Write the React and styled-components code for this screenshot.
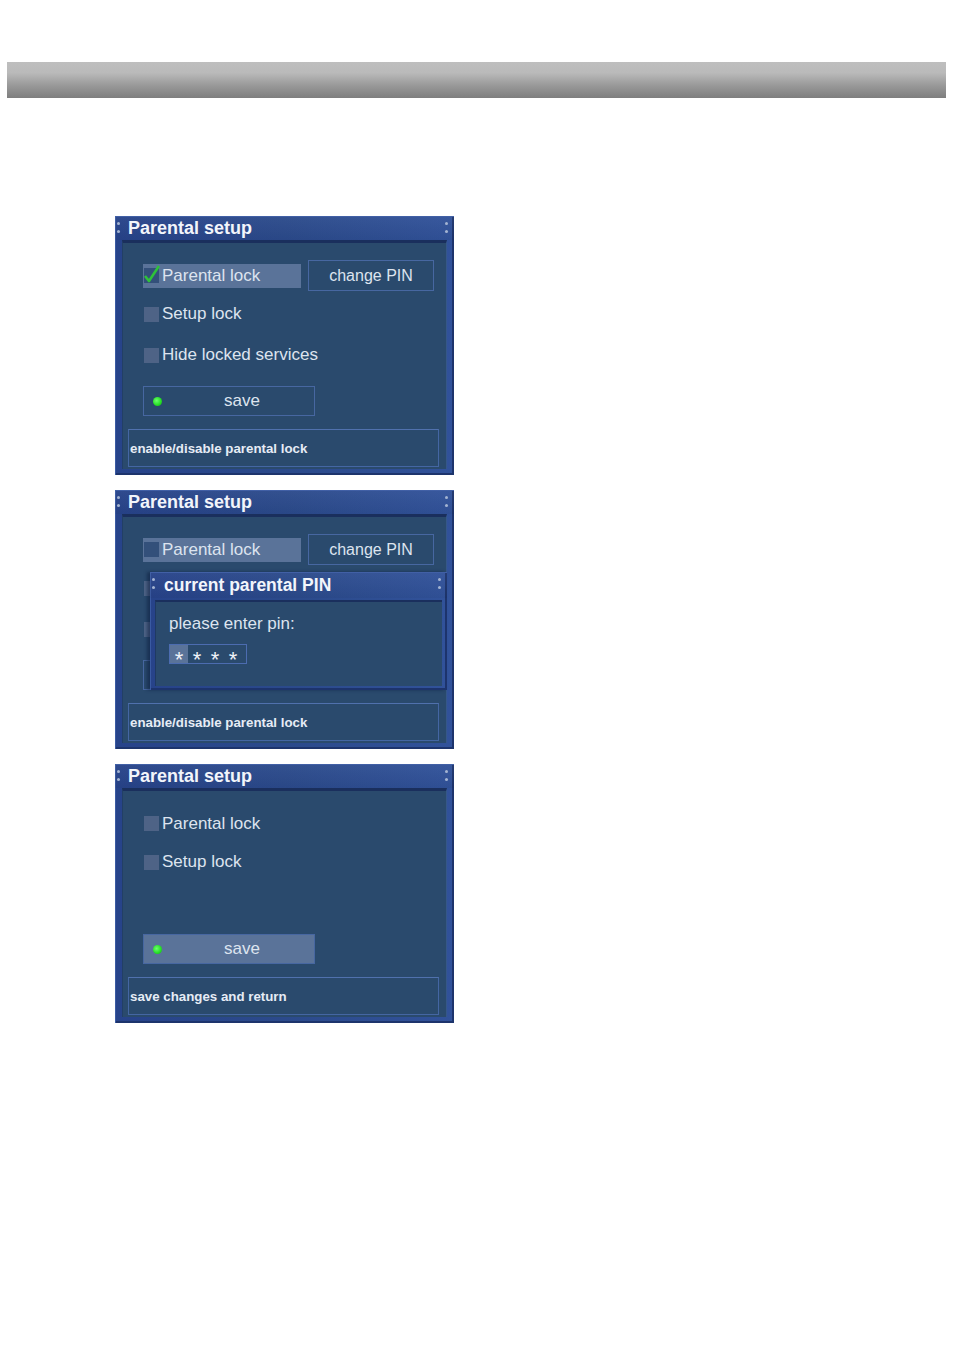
import React from 'react';
import styled, { createGlobalStyle } from 'styled-components';

const GlobalStyle = createGlobalStyle`
  html, body {
    margin: 0;
    padding: 0;
    background: #ffffff;
  }
  body {
    font-family: "Liberation Sans", Arial, sans-serif;
  }
`;

const Page = styled.div`
  width: 954px;
  min-height: 1350px;
  padding-top: 62px;
  box-sizing: border-box;
`;

const HeaderBar = styled.div`
  margin: 0 8px 0 7px;
  height: 36px;
  background: linear-gradient(to bottom, #bebebe 0%, #bababa 30%, #999999 65%, #7e7e7e 100%);
`;

const Stack = styled.div`
  margin-top: 118px;
  padding-left: 115px;
  display: flex;
  flex-direction: column;
  gap: 15px;
`;

const Frame = styled.section`
  position: relative;
  width: 339px;
  height: 259px;
  box-sizing: border-box;
  display: flex;
  flex-direction: column;
  background: linear-gradient(to right, #27438a 0%, #2b4a8b 50%, #31529a 100%);
  box-shadow: inset 1px 1px 0 #3a5aa2, inset -2px -2px 0 #1d346c;
`;

const TitleBar = styled.header`
  position: relative;
  height: ${(p) => p.$h || 24}px;
  flex: none;
  display: flex;
  align-items: center;
  padding-left: ${(p) => p.$pad || 13}px;
  color: #f2f5fb;
  font-size: ${(p) => p.$fs || 18}px;
  font-weight: bold;
  background: linear-gradient(to bottom, rgba(255, 255, 255, 0.04) 0%, rgba(0, 0, 0, 0.04) 100%);

  &::before,
  &::after {
    content: '';
    position: absolute;
    top: 6px;
    width: 3px;
    height: 3px;
    border-radius: 50%;
    background: #a4b4d2;
    box-shadow: 0 8px 0 #a4b4d2;
  }
  &::before {
    left: 2px;
  }
  &::after {
    right: 6px;
  }
`;

const Body = styled.div`
  flex: 1;
  margin: 0 7px 7px 7px;
  display: flex;
  flex-direction: column;
  background: #2a4a6d;
  border-top: 3px solid #1a2f5d;
  border-left: 1px solid #223f66;
  border-right: 1px solid #35578a;
`;

const Content = styled.div`
  padding: 17px 0 0 20px;
  display: grid;
  grid-template-rows: 31px 46px 36px;
`;

const Row = styled.div`
  display: flex;
  align-items: center;
  padding-left: ${(p) => p.$pl || 0}px;
`;

const Option = styled.div`
  width: 158px;
  height: 24px;
  display: flex;
  align-items: center;
  padding-left: 1px;
  box-sizing: border-box;
  background: ${(p) => (p.$active ? '#5a7399' : 'transparent')};
  color: #dde4ef;
  font-size: 17px;
  white-space: nowrap;
`;

const Box = styled.span`
  position: relative;
  width: 15px;
  height: 15px;
  flex: none;
  margin-right: 3px;
  background: ${(p) => (p.$dark ? '#33507a' : '#4e6386')};

  svg {
    position: absolute;
    left: 0;
    top: -4px;
  }
`;

const OutlineButton = styled.div`
  width: ${(p) => p.$w}px;
  height: ${(p) => p.$h}px;
  margin-left: ${(p) => p.$ml || 0}px;
  margin-top: ${(p) => p.$mt || 0}px;
  box-sizing: border-box;
  border: 1px solid #4767a1;
  background: ${(p) => (p.$active ? '#5a7399' : 'transparent')};
  color: #dde4ef;
  font-size: ${(p) => p.$fs || 17}px;
  display: flex;
  align-items: center;
  justify-content: center;
`;

const SaveButton = styled(OutlineButton)`
  justify-content: flex-start;
  padding-left: 9px;
`;

const Dot = styled.span`
  width: 9px;
  height: 9px;
  border-radius: 50%;
  background: radial-gradient(circle at 40% 40%, #6dff6d 0%, #22dd22 60%, #18b018 100%);
`;

const SaveLabel = styled.span`
  flex: 1;
  text-align: center;
  padding-left: 8px;
`;

const StatusBox = styled.div`
  height: 38px;
  margin: 13px 7px 2px 5px;
  box-sizing: border-box;
  border: 1px solid #4466a3;
  border-top-color: #5071ad;
  display: flex;
  align-items: center;
  padding-left: 1px;
  color: #e6ecf5;
  font-size: 13.3px;
  font-weight: bold;
`;

const Dialog = styled.div`
  position: absolute;
  top: 82px;
  left: 35px;
  width: 297px;
  height: 118px;
  box-sizing: border-box;
  display: flex;
  flex-direction: column;
  background: linear-gradient(to right, #27438a 0%, #2b4a8b 50%, #31529a 100%);
  box-shadow: inset 1px 1px 0 #3a5aa2, inset -2px -2px 0 #1d346c, -3px 0 3px rgba(10, 25, 60, 0.5);
`;

const DialogBody = styled.div`
  flex: 1;
  margin: 2px 5px 4px 5px;
  padding: 12px 0 0 13px;
  background: #2a4a6d;
  border-top: 2px solid #1a2f5d;
  border-left: 1px solid #1f3a63;
  color: #dde4ef;
  font-size: 17px;
`;

const PinBox = styled.div`
  margin-top: 10px;
  width: 78px;
  height: 20px;
  box-sizing: border-box;
  border: 1px solid #4c6cb0;
  display: flex;
  align-items: center;
`;

const PinCell = styled.span`
  display: block;
  width: 18px;
  height: 18px;
  box-sizing: border-box;
  padding-top: 6px;
  text-align: center;
  font-size: 22px;
  line-height: 18px;
  background: ${(p) => (p.$active ? '#5a7399' : 'transparent')};
  color: #eef2f8;
`;

const Check = () => (
  <svg width="16" height="19" viewBox="0 0 16 19">
    <path d="M1 12 L5 17 L15 2" fill="none" stroke="#2fc23a" strokeWidth="2.6" strokeLinejoin="round" />
  </svg>
);

const CheckOption = ({ label, checked, active }) => (
  <Option $active={active}>
    <Box $dark={active}>{checked && <Check />}</Box>
    {label}
  </Option>
);

const Save = ({ active, label = 'save' }) => (
  <SaveButton $w={172} $h={30} $mt={13} $active={active}>
    <Dot />
    <SaveLabel>{label}</SaveLabel>
  </SaveButton>
);

const ChangePin = () => (
  <OutlineButton $w={126} $h={31} $ml={7} $fs={16}>
    change PIN
  </OutlineButton>
);

const App = () => {
  return (
    <Page>
      <GlobalStyle />
      <HeaderBar />
      <Stack>
        <Frame>
          <TitleBar>Parental setup</TitleBar>
          <Body>
            <Content>
              <Row>
                <CheckOption label="Parental lock" checked active />
                <ChangePin />
              </Row>
              <Row>
                <CheckOption label="Setup lock" />
              </Row>
              <Row>
                <CheckOption label="Hide locked services" />
              </Row>
            </Content>
            <Row $pl={20}>
              <Save />
            </Row>
            <StatusBox>enable/disable parental lock</StatusBox>
          </Body>
        </Frame>

        <Frame>
          <TitleBar>Parental setup</TitleBar>
          <Body>
            <Content>
              <Row>
                <CheckOption label="Parental lock" active />
                <ChangePin />
              </Row>
              {/* rows below are covered by the PIN dialog */}
              <Row>
                <CheckOption />
              </Row>
              <Row>
                <CheckOption />
              </Row>
            </Content>
            <Row $pl={20}>
              <Save label="" />
            </Row>
            <StatusBox>enable/disable parental lock</StatusBox>
          </Body>
          <Dialog>
            <TitleBar $h={26} $pad={14} $fs={17.5}>current parental PIN</TitleBar>
            <DialogBody>
              please enter pin:
              <PinBox>
                <PinCell $active>*</PinCell>
                <PinCell>*</PinCell>
                <PinCell>*</PinCell>
                <PinCell>*</PinCell>
              </PinBox>
            </DialogBody>
          </Dialog>
        </Frame>

        <Frame>
          <TitleBar>Parental setup</TitleBar>
          <Body>
            <Content>
              <Row>
                <CheckOption label="Parental lock" />
              </Row>
              <Row>
                <CheckOption label="Setup lock" />
              </Row>
              <Row />
            </Content>
            <Row $pl={20}>
              <Save active />
            </Row>
            <StatusBox>save changes and return</StatusBox>
          </Body>
        </Frame>
      </Stack>
    </Page>
  );
};

export default App;
